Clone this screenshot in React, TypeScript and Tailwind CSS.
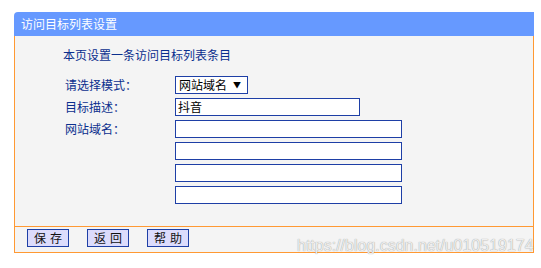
import React from "react";

const font = "font-['Noto_Sans_CJK_SC','Noto_Sans',sans-serif]";

function Field({ label, children }: { label: string; children: React.ReactNode }) {
  return (
    <div className="flex items-center h-[18px]">
      <div className="w-[160px] shrink-0 pl-[50px] text-[12px] leading-[12px] text-[#0b2f8e] whitespace-nowrap">{label}</div>
      {children}
    </div>
  );
}

function TextBox({ width, value }: { width: string; value?: string }) {
  return (
    <div className={`${width} shrink-0 h-[18px] bg-white border border-[#1e3fa6] text-[12px] leading-[16px] pl-[2px] text-black`}>
      {value}
    </div>
  );
}

export default function App() {
  const domains = [0, 1, 2, 3];

  return (
    <div className={`relative w-[541px] h-[268px] bg-white ${font}`}>
      <div className="pt-[12px] pl-[14px]">
        <div className="w-[520px]">
          {/* title bar */}
          <div className="h-[24px] bg-[#6699ff] rounded-tl-[4px] text-white text-[12px] leading-[24px] pl-[7px]">
            访问目标列表设置
          </div>

          {/* body */}
          <div className="h-[190px] bg-[#f4f4f4] border-x border-[#ff9933] pt-[13px]">
            <div className="pl-[48px] text-[12px] leading-[12px] text-[#0b2f8e]">本页设置一条访问目标列表条目</div>

            <div className="mt-[15px] flex flex-col gap-[4px]">
              <Field label="请选择模式：">
                <div className="w-[73px] shrink-0 h-[18px] bg-white border border-[#1e3fa6] flex items-center justify-between pl-[3px] pr-[6px] text-[12px] text-black">
                  <span>网站域名</span>
                  <span className="text-[8px]">▼</span>
                </div>
              </Field>
              <Field label="目标描述：">
                <TextBox width="w-[185px]" value="抖音" />
              </Field>
              {domains.map((i) => (
                <Field key={i} label={i === 0 ? "网站域名：" : ""}>
                  <TextBox width="w-[227px]" />
                </Field>
              ))}
            </div>
          </div>

          {/* footer */}
          <div className="h-[27px] bg-[#f4f4f4] border border-[#ff9933] flex items-start gap-[18px] pl-[12px] pt-[2px]">
            {["保存", "返回", "帮助"].map((b) => (
              <button
                key={b}
                className="w-[42px] h-[18px] bg-[#dcdcfc] border border-[#1e3fa6] text-[12px] leading-[16px] tracking-[4px] pl-[4px] text-[#111]"
              >
                {b}
              </button>
            ))}
          </div>
        </div>
      </div>

      {/* watermark */}
      <div className="absolute left-[297px] top-[237px] font-['Liberation_Sans',sans-serif] text-[16px] leading-[18px] text-[#eeeeee] [text-shadow:0_0_1px_rgba(0,0,0,0.45)] whitespace-nowrap">
        https://blog.csdn.net/u010519174
      </div>
    </div>
  );
}
